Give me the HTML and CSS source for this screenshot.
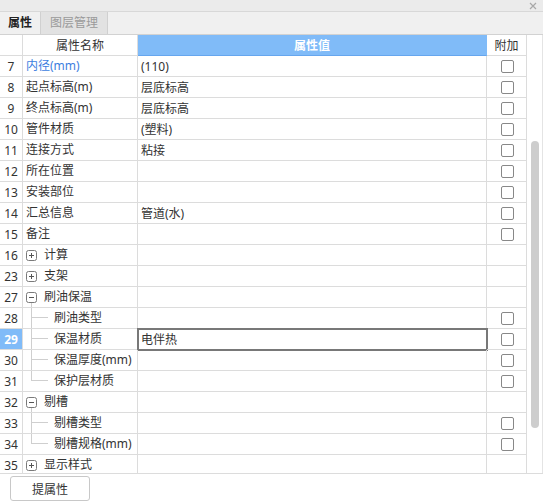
FILE: index.html
```html
<!DOCTYPE html>
<html lang="zh-CN">
<head>
<meta charset="utf-8">
<title>属性</title>
<link rel="stylesheet" href="styles.css">
</head>
<body>
<div class="panel">
  <div class="titlebar">
    <svg class="close" width="8" height="8" viewBox="0 0 8 8"><path d="M1 1L7 7M7 1L1 7" stroke="#a8a8a8" stroke-width="1.2"/></svg>
  </div>
  <div class="tabs">
    <div class="tab active">属性</div>
    <div class="tab">图层管理</div>
  </div>
  <div class="table">
    <div class="grid">
      <div class="row head">
        <div class="cell num"></div>
        <div class="cell name center">属性名称</div>
        <div class="cell val hval">属性值</div>
        <div class="cell add">附加</div>
      </div>

      <div class="row"><div class="cell num">7</div><div class="cell name link">内径(mm)</div><div class="cell val">(110)</div><div class="cell add"><span class="cb"></span></div></div>
      <div class="row"><div class="cell num">8</div><div class="cell name">起点标高(m)</div><div class="cell val">层底标高</div><div class="cell add"><span class="cb"></span></div></div>
      <div class="row"><div class="cell num">9</div><div class="cell name">终点标高(m)</div><div class="cell val">层底标高</div><div class="cell add"><span class="cb"></span></div></div>
      <div class="row"><div class="cell num">10</div><div class="cell name">管件材质</div><div class="cell val">(塑料)</div><div class="cell add"><span class="cb"></span></div></div>
      <div class="row"><div class="cell num">11</div><div class="cell name">连接方式</div><div class="cell val">粘接</div><div class="cell add"><span class="cb"></span></div></div>
      <div class="row"><div class="cell num">12</div><div class="cell name">所在位置</div><div class="cell val"></div><div class="cell add"><span class="cb"></span></div></div>
      <div class="row"><div class="cell num">13</div><div class="cell name">安装部位</div><div class="cell val"></div><div class="cell add"><span class="cb"></span></div></div>
      <div class="row"><div class="cell num">14</div><div class="cell name">汇总信息</div><div class="cell val">管道(水)</div><div class="cell add"><span class="cb"></span></div></div>
      <div class="row"><div class="cell num">15</div><div class="cell name">备注</div><div class="cell val"></div><div class="cell add"><span class="cb"></span></div></div>

      <div class="row"><div class="cell num">16</div><div class="cell name"><span class="tog"><svg class="box" width="11" height="11" viewBox="0 0 11 11"><rect x="0.5" y="0.5" width="10" height="10" rx="2" fill="#fff" stroke="#7a7a7a"/><path d="M3 5.5H8M5.5 3V8" stroke="#555"/></svg></span><span class="label">计算</span></div><div class="cell val"></div><div class="cell add"></div></div>
      <div class="row"><div class="cell num">23</div><div class="cell name"><span class="tog"><svg class="box" width="11" height="11" viewBox="0 0 11 11"><rect x="0.5" y="0.5" width="10" height="10" rx="2" fill="#fff" stroke="#7a7a7a"/><path d="M3 5.5H8M5.5 3V8" stroke="#555"/></svg></span><span class="label">支架</span></div><div class="cell val"></div><div class="cell add"></div></div>
      <div class="row"><div class="cell num">27</div><div class="cell name"><span class="tog"><svg class="box" width="11" height="11" viewBox="0 0 11 11"><rect x="0.5" y="0.5" width="10" height="10" rx="2" fill="#fff" stroke="#7a7a7a"/><path d="M3 5.5H8" stroke="#555"/></svg><span class="stub"></span></span><span class="label">刷油保温</span></div><div class="cell val"></div><div class="cell add"></div></div>
      <div class="row"><div class="cell num">28</div><div class="cell name"><span class="branch"><span class="top"></span><span class="bot"></span></span><span class="label">刷油类型</span></div><div class="cell val"></div><div class="cell add"><span class="cb"></span></div></div>
      <div class="row"><div class="cell num sel">29</div><div class="cell name"><span class="branch"><span class="top"></span><span class="bot"></span></span><span class="label">保温材质</span></div><div class="cell val edit">电伴热</div><div class="cell add"><span class="cb"></span></div></div>
      <div class="row"><div class="cell num">30</div><div class="cell name"><span class="branch"><span class="top"></span><span class="bot"></span></span><span class="label">保温厚度(mm)</span></div><div class="cell val"></div><div class="cell add"><span class="cb"></span></div></div>
      <div class="row"><div class="cell num">31</div><div class="cell name"><span class="branch last"><span class="top"></span><span class="bot"></span></span><span class="label">保护层材质</span></div><div class="cell val"></div><div class="cell add"><span class="cb"></span></div></div>
      <div class="row"><div class="cell num">32</div><div class="cell name"><span class="tog"><svg class="box" width="11" height="11" viewBox="0 0 11 11"><rect x="0.5" y="0.5" width="10" height="10" rx="2" fill="#fff" stroke="#7a7a7a"/><path d="M3 5.5H8" stroke="#555"/></svg><span class="stub"></span></span><span class="label">剔槽</span></div><div class="cell val"></div><div class="cell add"></div></div>
      <div class="row"><div class="cell num">33</div><div class="cell name"><span class="branch"><span class="top"></span><span class="bot"></span></span><span class="label">剔槽类型</span></div><div class="cell val"></div><div class="cell add"><span class="cb"></span></div></div>
      <div class="row"><div class="cell num">34</div><div class="cell name"><span class="branch last"><span class="top"></span><span class="bot"></span></span><span class="label">剔槽规格(mm)</span></div><div class="cell val"></div><div class="cell add"><span class="cb"></span></div></div>
      <div class="row"><div class="cell num">35</div><div class="cell name"><span class="tog"><svg class="box" width="11" height="11" viewBox="0 0 11 11"><rect x="0.5" y="0.5" width="10" height="10" rx="2" fill="#fff" stroke="#7a7a7a"/><path d="M3 5.5H8M5.5 3V8" stroke="#555"/></svg></span><span class="label">显示样式</span></div><div class="cell val"></div><div class="cell add"></div></div>
    </div>
    <div class="vscroll"><div class="thumb"></div></div>
  </div>
  <div class="footer">
    <button class="btn" type="button">提属性</button>
  </div>
</div>
</body>
</html>
```

FILE: styles.css
```css
* { box-sizing: border-box; }
html, body { margin: 0; padding: 0; background: #fff; }
body {
  width: 543px;
  height: 501px;
  overflow: hidden;
  font-family: "Noto Sans", "Noto Sans CJK SC", sans-serif;
  font-size: 12px;
  color: #333;
}
.titlebar {
  height: 12px;
  background: #ebebeb;
  border-bottom: 1px solid #d8d8d8;
  display: flex;
  justify-content: flex-end;
  align-items: center;
  padding-right: 6px;
}
.close { display: block; }
.tabs {
  height: 23px;
  background: #f0f0f0;
  border-bottom: 1px solid #d2d2d2;
  display: flex;
}
.tab {
  line-height: 22px;
  padding: 0 9px 0 9px;
  color: #9a9a9a;
  background: #e2e2e2;
  border-right: 1px solid #d0d0d0;
  font-size: 12px;
}
.tab.active {
  background: #f0f0f0;
  color: #222;
  font-weight: bold;
  padding: 0 8px;
  width: 41px;
}
.table {
  display: flex;
  height: 439px;
  border-bottom: 1px solid #dcdcdc;
}
.grid {
  width: 527px;
  height: 438px;
  overflow: hidden;
}
.row {
  display: grid;
  grid-template-columns: 23px 115px 349px 40px;
  height: 21px;
}
.cell {
  border-right: 1px solid #dcdcdc;
  border-bottom: 1px solid #dcdcdc;
  display: flex;
  align-items: center;
  white-space: nowrap;
  overflow: hidden;
  height: 21px;
}
.num { justify-content: center; color: #333; }
.num.sel { background: #80bbf8; color: #fff; font-weight: bold; }
.name { padding-left: 3px; align-items: stretch; }
.name.center { justify-content: center; align-items: center; padding-left: 0; }
.name:not(.center) { line-height: 20px; }
.link { color: #3d7ee0; }
.val { padding-left: 3px; }
.hval {
  background: #80bbf8;
  color: #fff;
  font-weight: bold;
  justify-content: center;
  padding-left: 0;
  border-bottom-color: #66a6ee;
  border-right-color: #80bbf8;
}
.edit { outline: 2px solid #787878; outline-offset: -1px; }
.add { justify-content: center; }
.head .add { color: #333; }
.cb {
  width: 13px;
  height: 13px;
  border: 1px solid #888;
  border-radius: 2px;
  background: #fff;
  margin-left: 1px;
}
.tog {
  display: flex;
  flex-direction: column;
  width: 11px;
  padding-top: 5px;
  margin-right: 7px;
}
.box { display: block; flex: none; }
.stub { flex: 1; margin-left: 5px; border-left: 1px solid #cfcfcf; }
.branch {
  display: flex;
  flex-direction: column;
  width: 17px;
  margin-left: 5px;
  margin-right: 6px;
  height: 21px;
}
.branch .top { height: 10px; border-left: 1px solid #cfcfcf; border-bottom: 1px solid #cfcfcf; }
.branch .bot { flex: 1; border-left: 1px solid #cfcfcf; }
.branch.last .bot { border-left-color: transparent; }
.label { align-self: center; }
.vscroll {
  width: 16px;
  padding-top: 106px;
  border-right: 1px solid #e4e4e4;
}
.thumb {
  width: 8px;
  height: 287px;
  margin-left: 4px;
  border-radius: 4px;
  background: #cdcdcd;
}
.footer { padding: 2px 0 0 10px; }
.btn {
  width: 80px;
  height: 25px;
  border: 1px solid #c8c8c8;
  border-radius: 3px;
  background: #fff;
  font-family: inherit;
  font-size: 12px;
  color: #333;
  padding: 0;
}
```
